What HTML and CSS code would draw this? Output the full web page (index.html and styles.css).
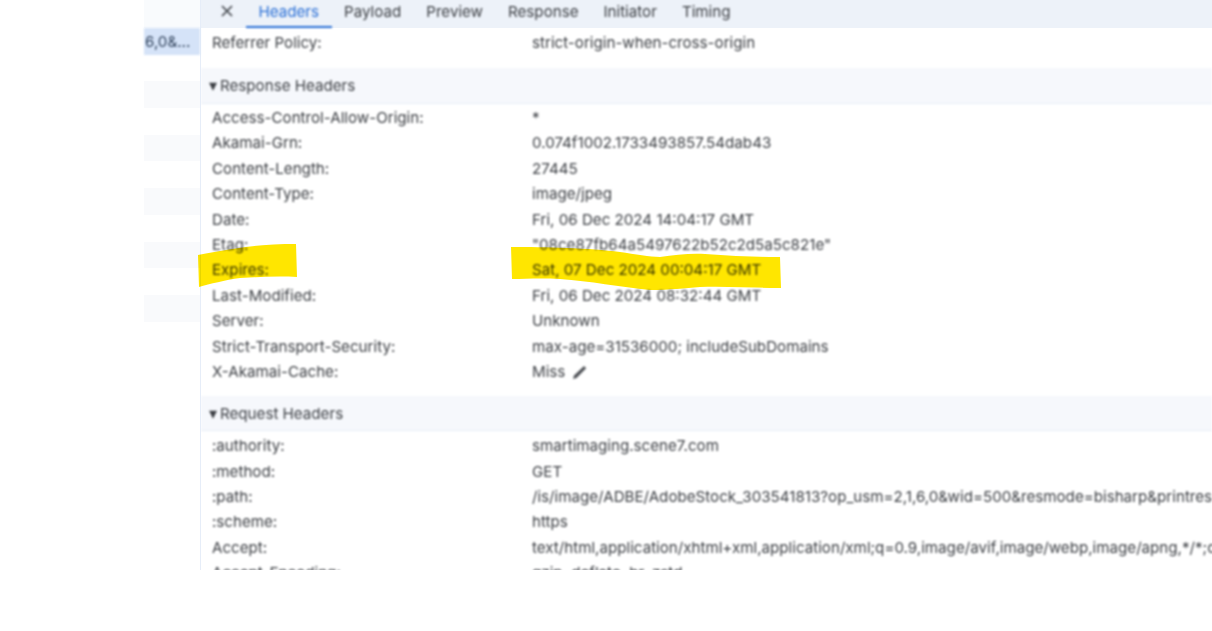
FILE: index.html
```html
<!DOCTYPE html>
<html lang="en">
<head>
    <meta charset="UTF-8">
    <title>Expires header</title>
    <link rel="stylesheet" href="styles.css">
</head>
<body>
    <div class="shot">
        <!-- Request list -->
        <div class="list">
            <div class="list-head"></div>
            <div class="list-row selected">6,0&amp;...</div>
            <div class="list-row"></div>
            <div class="list-row striped"></div>
            <div class="list-row"></div>
            <div class="list-row striped"></div>
            <div class="list-row"></div>
            <div class="list-row striped"></div>
            <div class="list-row"></div>
            <div class="list-row striped"></div>
            <div class="list-row"></div>
            <div class="list-row striped"></div>
        </div>

        <div class="panel">
            <!-- Tabs -->
            <div class="tabs">
                <svg class="close" width="14" height="14" viewBox="0 0 14 14">
                    <path d="M2 2l10 10M12 2L2 12" />
                </svg>
                <span class="tab active">Headers</span>
                <span class="tab">Payload</span>
                <span class="tab">Preview</span>
                <span class="tab">Response</span>
                <span class="tab">Initiator</span>
                <span class="tab">Timing</span>
            </div>

            <div class="rows first">
                <div class="row"><span>Referrer Policy:</span><span>strict-origin-when-cross-origin</span></div>
            </div>

            <div class="section">&#9662;<span>Response Headers</span></div>
            <div class="rows response">
                <div class="row"><span>Access-Control-Allow-Origin:</span><span>*</span></div>
                <div class="row"><span>Akamai-Grn:</span><span>0.074f1002.1733493857.54dab43</span></div>
                <div class="row"><span>Content-Length:</span><span>27445</span></div>
                <div class="row"><span>Content-Type:</span><span>image/jpeg</span></div>
                <div class="row"><span>Date:</span><span>Fri, 06 Dec 2024 14:04:17 GMT</span></div>
                <div class="row"><span>Etag:</span><span>"08ce87fb64a5497622b52c2d5a5c821e"</span></div>
                <div class="row"><span>Expires:</span><span>Sat, 07 Dec 2024 00:04:17 GMT</span></div>
                <div class="row"><span>Last-Modified:</span><span>Fri, 06 Dec 2024 08:32:44 GMT</span></div>
                <div class="row"><span>Server:</span><span>Unknown</span></div>
                <div class="row"><span>Strict-Transport-Security:</span><span>max-age=31536000; includeSubDomains</span></div>
                <div class="row"><span>X-Akamai-Cache:</span>
                    <span class="with-icon">Miss
                        <svg class="pencil" width="18" height="18" viewBox="0 0 18 18">
                            <path d="M2 16l1-3.5L13 3l2.2 2.2L5.5 15z" />
                        </svg>
                    </span>
                </div>
            </div>

            <div class="section">&#9662;<span>Request Headers</span></div>
            <div class="rows request">
                <div class="row"><span>:authority:</span><span>smartimaging.scene7.com</span></div>
                <div class="row"><span>:method:</span><span>GET</span></div>
                <div class="row"><span>:path:</span><span>/is/image/ADBE/AdobeStock_303541813?op_usm=2,1,6,0&amp;wid=500&amp;resmode=bisharp&amp;printres=72</span></div>
                <div class="row"><span>:scheme:</span><span>https</span></div>
                <div class="row"><span>Accept:</span><span>text/html,application/xhtml+xml,application/xml;q=0.9,image/avif,image/webp,image/apng,*/*;q=0.8</span></div>
                <div class="row"><span>Accept-Encoding:</span><span>gzip, deflate, br, zstd</span></div>
            </div>
        </div>

        <!-- Marker strokes drawn over the screenshot -->
        <svg class="marker" width="1212" height="570" viewBox="0 0 1212 570">
            <path d="M198 255C208 253 220 251 232 249C255 245 275 244 296 244L297 277C278 276 258 277 240 278C225 280 210 284 199 287Z" />
            <path d="M511 247C545 247 590 248 620 252C635 254 650 257 660 257C675 255 690 253 705 254C730 256 755 257 780 257L781 288C755 288 725 286 700 287C685 288 670 290 650 290C620 287 590 281 560 279C540 278 525 279 512 279Z" />
        </svg>
    </div>
</body>
</html>
```

FILE: styles.css
```css
body {
    margin: 0;
    background: #ffffff;
    overflow: hidden;
}

.shot {
    position: relative;
    display: flex;
    height: 570px;
    padding-left: 144px;
    overflow: hidden;
    font-family: 'Inter', 'Liberation Sans', sans-serif;
    font-size: 15.15px;
    color: #3c3f44;
}

/* Request list */
.list {
    width: 56px;
    flex-shrink: 0;
    border-right: 1px solid #e6edf8;
}

.list-head {
    height: 28px;
    background: #f9fbfd;
}

.list-row {
    height: 26.7px;
    line-height: 27px;
    padding-left: 1px;
    overflow: hidden;
    white-space: nowrap;
}

.list-row.selected {
    background: #d5e3f8;
    color: #34465f;
    filter: blur(1px);
}

.list-row.striped {
    background: #f9fafc;
}

/* Tabs */
.panel {
    flex: 1;
    min-width: 0;
    overflow: hidden;
}

.tabs {
    display: flex;
    align-items: center;
    height: 28px;
    padding-left: 19px;
    background: #edf2f9;
    box-sizing: border-box;
}

.close {
    margin: 0 12px 6px 0;
    flex-shrink: 0;
    filter: blur(0.8px);
}

.close path {
    fill: none;
    stroke: #44484e;
    stroke-width: 1.7;
}

.tab {
    padding: 0 12.5px;
    line-height: 23px;
    height: 28px;
    box-sizing: border-box;
    filter: blur(1.1px);
}

.tab.active {
    color: #2a6fd6;
    border-bottom: 2px solid #2a6fd6;
}

/* Header rows */
.rows {
    padding-top: 1.5px;
}

.rows.first {
    height: 40px;
    box-sizing: border-box;
    padding-top: 2px;
}

.rows.response {
    padding-bottom: 11.5px;
}

.rows.request {
    padding-top: 2px;
}

.row {
    display: grid;
    grid-template-columns: 320px 1fr;
    height: 25.4px;
    line-height: 25.4px;
    padding-left: 11px;
    white-space: nowrap;
    filter: blur(1.1px);
}

.section {
    display: flex;
    align-items: center;
    height: 35.5px;
    padding-left: 8px;
    background: #f6f8fc;
    border-bottom: 1px solid #e8eef7;
    box-sizing: border-box;
    font-size: 16px;
    filter: blur(1px);
}

.section span {
    margin-left: 3px;
    font-size: 15.15px;
}

.with-icon {
    display: flex;
    align-items: center;
    gap: 6px;
}

.pencil path {
    fill: #505358;
}

/* Yellow marker */
.marker {
    position: absolute;
    top: 0;
    left: 0;
    mix-blend-mode: multiply;
    filter: blur(0.7px);
}

.marker path {
    fill: #ffe600;
}
```
